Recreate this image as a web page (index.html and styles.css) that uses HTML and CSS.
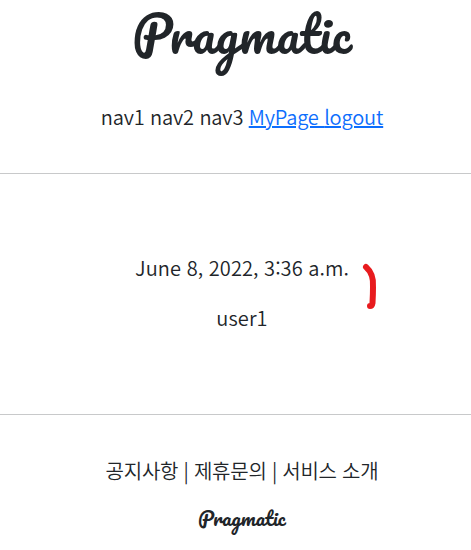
FILE: index.html
```
<!DOCTYPE html>
<html lang="ko">
<head>
    <meta charset="UTF-8">
    <meta name="viewport" content="width=device-width, initial-scale=1.0">
    <title>Pragmatic</title>
    <link rel="stylesheet" href="styles.css">
</head>
<body>
    <header class="header">
        <h1 class="logo">Pragmatic</h1>
        <nav class="nav">
            <span class="nav-items">nav1 nav2 nav3</span>
            <span class="nav-links"><a href="#">MyPage </a><a href="#">logout</a></span>
        </nav>
    </header>

    <main class="content">
        <p class="date">June 8, 2022, 3:36 a.m.</p>
        <p class="user">user1</p>
        <svg class="mark" width="20" height="52" viewBox="0 0 20 52">
            <path d="M6 7 Q14 14 13 27 Q13 34 12.500 43 Q12 46 10 46" />
        </svg>
    </main>

    <footer class="footer">
        <p class="footer-menu">공지사항 | 제휴문의 | 서비스 소개</p>
        <p class="footer-logo">Pragmatic</p>
    </footer>
</body>
</html>
```

FILE: styles.css
```
* {
    box-sizing: border-box;
}

body {
    margin: 0;
    width: 484px;
    min-height: 550px;
    background: #fff;
    color: #212529;
    font-family: "Noto Sans CJK KR", sans-serif;
    font-size: 20px;
    font-weight: 350;
    line-height: 30px;
    text-align: center;
}

html {
    overflow: hidden;
}

p {
    margin: 0;
}

a {
    color: #0d6efd;
    text-decoration-thickness: 2px;
}

.header {
    height: 174px;
    border-bottom: 1px solid #c8c9ca;
}

.logo,
.footer-logo {
    font-family: Pacifico, cursive;
    font-weight: 400;
}

.logo {
    margin: 0;
    height: 102px;
    font-size: 50px;
    line-height: 66px;
}

.nav {
    letter-spacing: -0.15px;
}

.content {
    position: relative;
    height: 241px;
    padding-top: 79px;
    border-bottom: 1px solid #c8c9ca;
}

.date {
    letter-spacing: 0.06px;
}

.user {
    margin-top: 20px;
    letter-spacing: 0.1px;
}

/* red pen stroke next to the date */
.mark {
    position: absolute;
    top: 86px;
    left: 360px;
    fill: none;
    stroke: #e81b1e;
    stroke-width: 6;
    stroke-linecap: round;
    stroke-linejoin: round;
}

.footer {
    padding-top: 41px;
}

.footer-menu {
    letter-spacing: -0.25px;
}

.footer-logo {
    margin-top: 17px;
    font-size: 20px;
}
```
